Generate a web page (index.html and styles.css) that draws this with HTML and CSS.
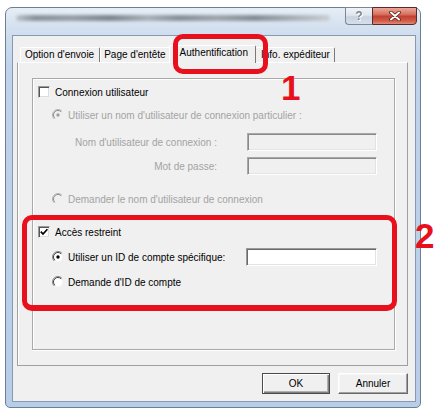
FILE: index.html
```html
<!DOCTYPE html>
<html lang="fr">
<head>
<meta charset="utf-8">
<title>Authentification</title>
<link rel="stylesheet" href="styles.css">
</head>
<body>
<svg class="defs" width="0" height="0" aria-hidden="true">
  <defs>
    <symbol id="radio-on" viewBox="0 0 12 12">
      <circle cx="6" cy="6" r="4.5" fill="#fff"/>
      <path d="M2.1 9.9A5.5 5.5 0 0 1 9.9 2.1" stroke="#8a8a8a" fill="none"/>
      <path d="M2.8 9.2A4.5 4.5 0 0 1 9.2 2.8" stroke="#404040" fill="none"/>
      <circle cx="6" cy="6" r="1.7" fill="#000"/>
    </symbol>
    <symbol id="radio-off" viewBox="0 0 12 12">
      <circle cx="6" cy="6" r="4.5" fill="#fff"/>
      <path d="M2.1 9.9A5.5 5.5 0 0 1 9.9 2.1" stroke="#8a8a8a" fill="none"/>
      <path d="M2.8 9.2A4.5 4.5 0 0 1 9.2 2.8" stroke="#404040" fill="none"/>
    </symbol>
    <symbol id="radio-dis-on" viewBox="0 0 12 12">
      <circle cx="6" cy="6" r="4.5" fill="#f0f0f0"/>
      <path d="M2.1 9.9A5.5 5.5 0 0 1 9.9 2.1" stroke="#b4b4b4" fill="none"/>
      <path d="M2.8 9.2A4.5 4.5 0 0 1 9.2 2.8" stroke="#8c8c8c" fill="none"/>
      <circle cx="6" cy="6" r="1.7" fill="#a0a0a0"/>
    </symbol>
    <symbol id="radio-dis-off" viewBox="0 0 12 12">
      <circle cx="6" cy="6" r="4.5" fill="#f0f0f0"/>
      <path d="M2.1 9.9A5.5 5.5 0 0 1 9.9 2.1" stroke="#b4b4b4" fill="none"/>
      <path d="M2.8 9.2A4.5 4.5 0 0 1 9.2 2.8" stroke="#8c8c8c" fill="none"/>
    </symbol>
  </defs>
</svg>

<div class="window">
  <div class="titlebar">
    <div class="title-blur"></div>
    <div class="caption-buttons">
      <div class="btn-help">?</div>
      <div class="btn-close">
        <svg width="12" height="10" viewBox="0 0 12 10">
          <path d="M2 1.5L10 8.5M10 1.5L2 8.5" stroke="#5a1f1a" stroke-width="3.6" stroke-linecap="round"/>
          <path d="M2 1.5L10 8.5M10 1.5L2 8.5" stroke="#fff" stroke-width="2" stroke-linecap="round"/>
        </svg>
      </div>
    </div>
  </div>

  <div class="client">
    <div class="tabs">
      <div class="tab t1">Option d'envoie</div>
      <div class="tab t2">Page d'entête</div>
      <div class="tab active">Authentification</div>
      <div class="tab t4">Info. expéditeur</div>
    </div>

    <div class="panel">
      <div class="group">
        <div class="row r1">
          <span class="cb"></span>
          <span>Connexion utilisateur</span>
        </div>
        <div class="row indent r2 disabled">
          <svg class="radio"><use href="#radio-dis-on"/></svg>
          <span>Utiliser un nom d'utilisateur de connexion particulier :</span>
        </div>
        <div class="row r3 disabled">
          <span class="field-label">Nom d'utilisateur de connexion :</span>
          <span class="input dis"></span>
        </div>
        <div class="row r4 disabled">
          <span class="field-label">Mot de passe:</span>
          <span class="input dis"></span>
        </div>
        <div class="row indent r5 disabled">
          <svg class="radio"><use href="#radio-dis-off"/></svg>
          <span>Demander le nom d'utilisateur de connexion</span>
        </div>
        <div class="row r6">
          <span class="cb">
            <svg width="10" height="10" viewBox="0 0 10 10"><path d="M1.8 4.6L4 7L8.4 2.2" stroke="#000" stroke-width="1.7" fill="none"/></svg>
          </span>
          <span>Accès restreint</span>
        </div>
        <div class="row indent r7">
          <svg class="radio"><use href="#radio-on"/></svg>
          <span>Utiliser un ID de compte spécifique:</span>
          <span class="input id"></span>
        </div>
        <div class="row indent r8">
          <svg class="radio"><use href="#radio-off"/></svg>
          <span>Demande d'ID de compte</span>
        </div>
      </div>
    </div>

    <div class="footer">
      <div class="btn default">OK</div>
      <div class="btn">Annuler</div>
    </div>
  </div>
</div>

<div class="callout callout-1"></div>
<div class="callout callout-2"></div>
<div class="num num-1">1</div>
<div class="num num-2">2</div>
</body>
</html>
```

FILE: styles.css
```css
html, body {
  margin: 0;
  padding: 0;
  background: #fff;
}
body {
  font-family: "Liberation Sans", Arial, sans-serif;
  font-size: 10px;
  color: #000;
  width: 437px;
  height: 412px;
  overflow: hidden;
  position: relative;
}
.defs {
  position: absolute;
  width: 0;
  height: 0;
}

/* window frame */
.window {
  margin: 7px 0 0 5px;
  width: 416px;
  height: 401px;
  box-sizing: border-box;
  border: 1px solid #6f7f92;
  border-radius: 7px 7px 5px 5px;
  background: linear-gradient(#e6edf5 0, #d3e0ef 20px, #bfd3ea 60px, #b7cde8 100%);
  padding: 0 4px 5px 6px;
  display: flex;
  flex-direction: column;
}
.titlebar {
  height: 27px;
  display: flex;
  align-items: flex-start;
  flex: none;
}
.title-blur {
  margin: 7px 0 0 4px;
  width: 314px;
  height: 6px;
  background: linear-gradient(90deg, #b9bec5 0, #7d838b 6%, #8d939b 18%, #6f757d 30%, #a2a7ae 42%, #7a8088 52%, #969ba2 64%, #777d85 76%, #a0a5ab 88%, #c6cacf 100%);
  filter: blur(1.4px);
  border-radius: 3px;
  opacity: .85;
}
.caption-buttons {
  margin-left: auto;
  margin-top: -1px;
  margin-right: -1px;
  display: flex;
}
.btn-help {
  width: 27px;
  height: 18px;
  box-sizing: border-box;
  border: 1px solid #7b8696;
  border-right: none;
  border-radius: 0 0 0 4px;
  background: linear-gradient(#f1f4f8 0, #dfe6ef 45%, #c8d3e0 55%, #d6dfea 100%);
  color: #7c8591;
  font-size: 12px;
  font-weight: bold;
  text-align: center;
  line-height: 16px;
  text-shadow: 0 0 1px #fff, 1px 1px 0 #fff;
}
.btn-close {
  width: 45px;
  height: 18px;
  box-sizing: border-box;
  border: 1px solid #5b2a26;
  border-radius: 0 0 4px 0;
  background: linear-gradient(#e9a99b 0, #d7705f 40%, #c2402f 52%, #cf5c49 80%, #e08a77 100%);
  display: flex;
  align-items: center;
  justify-content: center;
}

/* client area */
.client {
  flex: 1;
  background: #f0f0f0;
  border: 1px solid #8799b0;
  display: flex;
  flex-direction: column;
}
.tabs {
  height: 26px;
  display: flex;
  align-items: flex-end;
  padding-left: 7px;
  position: relative;
  z-index: 1;
  flex: none;
}
.tab {
  height: 15px;
  box-sizing: border-box;
  padding: 0 4px;
  border-top: 1px solid #fff;
  border-left: 1px solid #fff;
  border-right: 1px solid #7a7a7a;
  border-radius: 2px 2px 0 0;
  line-height: 14px;
  white-space: nowrap;
  background: #f0f0f0;
}
.tab.t1 {
  padding: 0 5px 0 4px;
}
.tab.t2 {
  padding: 0 4px 0 3px;
}
.tab.active {
  height: 18px;
  margin: 0 -2px -1px;
  padding: 0 7px 0 10px;
  line-height: 14px;
  position: relative;
}
.tab.t4 {
  padding: 0 4px 0 6px;
}
.panel {
  height: 304px;
  box-sizing: border-box;
  margin: 0 7px 0 4px;
  border: 1px solid #a0a0a0;
  border-top-color: #fff;
  box-shadow: inset 1px 0 0 #fff;
  display: flex;
  flex-direction: column;
  flex: none;
}
.group {
  flex: 1;
  margin: 15px 12px 15px 14px;
  border: 1px solid #a9a9a9;
  box-shadow: inset 1px 1px 0 #fff, 1px 1px 0 #fff;
  display: flex;
  flex-direction: column;
}

/* rows */
.row {
  height: 20px;
  display: flex;
  align-items: center;
  padding-left: 5px;
  white-space: nowrap;
}
.row.indent {
  padding-left: 19px;
}
.row.disabled {
  color: #a3a3a3;
}
.r1 { margin-top: 3px; }
.r2 { margin-top: 3px; }
.r3 { margin-top: 7px; }
.r4 { margin-top: 4px; }
.r5 { margin-top: 13px; }
.r6 { margin-top: 13px; }
.r7 { margin-top: 5px; }
.r8 { margin-top: 5px; }

.field-label {
  width: 179px;
  text-align: right;
}
.radio {
  width: 12px;
  height: 12px;
  margin-right: 4px;
  flex: none;
}
.cb {
  width: 12px;
  height: 12px;
  box-sizing: border-box;
  border: 1px solid;
  border-color: #9a9a9a #f4f4f4 #f4f4f4 #9a9a9a;
  box-shadow: inset 1px 1px 0 #555, inset -1px -1px 0 #dcdcdc;
  background: #fff;
  margin-right: 5px;
  display: flex;
  align-items: center;
  justify-content: center;
  flex: none;
}
.input {
  margin-left: auto;
  margin-right: 17px;
  width: 130px;
  height: 18px;
  box-sizing: border-box;
  border: 1px solid;
  border-color: #9a9a9a #fff #fff #9a9a9a;
  box-shadow: inset 1px 1px 0 #6a6a6a, inset -1px -1px 0 #e3e3e3;
  background: #fff;
  flex: none;
}
.input.dis {
  background: #f0f0f0;
  border-color: #a8a8a8 #fff #fff #a8a8a8;
  box-shadow: inset 1px 1px 0 #8a8a8a, inset -1px -1px 0 #e3e3e3;
}
.input.id {
  width: 131px;
}

/* footer buttons */
.footer {
  display: flex;
  justify-content: flex-end;
  gap: 8px;
  margin: 7px 7px 0 0;
}
.btn {
  width: 70px;
  height: 21px;
  box-sizing: border-box;
  border: 1px solid;
  border-color: #fff #6a6a6a #6a6a6a #fff;
  box-shadow: inset -1px -1px 0 #a0a0a0, inset 1px 1px 0 #f8f8f8;
  background: #f0f0f0;
  text-align: center;
  line-height: 19px;
}
.btn.default {
  width: 68px;
  border-color: #4a4a4a;
  box-shadow: inset 1px 1px 0 #fff, inset -1px -1px 0 #808080, inset -2px -2px 0 #b0b0b0;
}

/* annotations (drawn over the dialog) */
.callout {
  position: absolute;
  z-index: 10;
  box-sizing: border-box;
  border: 5px solid #e8101c;
  border-radius: 10px;
}
.callout-1 {
  left: 173px;
  top: 34px;
  width: 95px;
  height: 40px;
}
.callout-2 {
  left: 22px;
  top: 215px;
  width: 375px;
  height: 96px;
  border-width: 5px 5px 6px 5px;
}
.num {
  position: absolute;
  z-index: 10;
  font-family: "Liberation Sans", Arial, sans-serif;
  font-weight: bold;
  font-size: 35px;
  line-height: 35px;
  color: #e8101c;
}
.num-1 {
  left: 281px;
  top: 70px;
}
.num-2 {
  left: 415px;
  top: 218px;
}
```
